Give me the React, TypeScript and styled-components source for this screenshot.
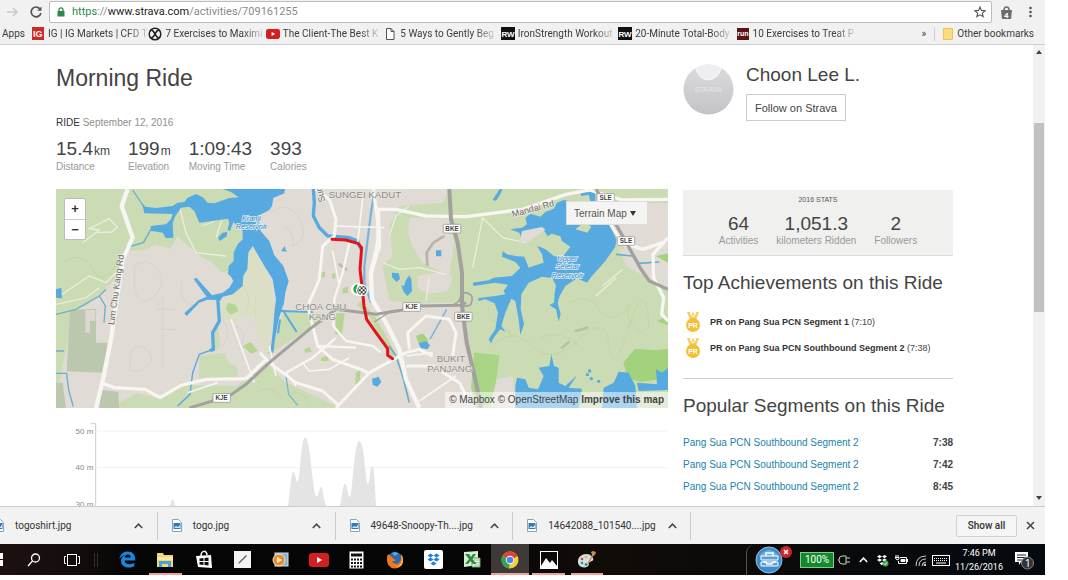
import React from "react";
import styled, { createGlobalStyle, css } from "styled-components";

const sans = `"Liberation Sans", Arial, sans-serif`;
const ui = `Roboto, "Noto Sans", sans-serif`;

const GlobalStyle = createGlobalStyle`
  *, *::before, *::after { box-sizing: border-box; }
  body { margin: 0; background: #fff; font-family: ${sans}; color: #444; }
  button, input, select { font: inherit; color: inherit; }
  svg { display: block; }
`;

const Desktop = styled.div`
  display: flex;
  flex-direction: column;
  height: 100vh;
  padding: 0 23px 5px 0;
  overflow: hidden;
`;

/* ---------- browser chrome ---------- */

const Toolbar = styled.header`
  flex: none;
  background: #f1f1f1;
  border-bottom: 1px solid #cfcfcf;
  font-family: ${ui};
  color: #3c3c3c;
`;

const AddressRow = styled.div`
  display: flex;
  align-items: center;
  height: 23px;
  padding: 1px 1px 0 4px;
`;

const IconButton = styled.button<{ $w?: number }>`
  display: flex;
  align-items: center;
  justify-content: center;
  flex: none;
  width: ${(p) => p.$w ?? 22}px;
  height: 22px;
  padding: 0;
  border: 0;
  background: none;
`;

const AddressBox = styled.div`
  flex: 1;
  display: flex;
  align-items: center;
  gap: 7px;
  height: 22px;
  margin-right: 3px;
  padding: 0 0 0 7px;
  border: 1px solid #bdbdbd;
  border-radius: 2px;
  background: #fff;
`;

const Url = styled.div`
  flex: 1;
  font-size: 11px;
  line-height: 16px;
  color: #8a8a8a;
  white-space: nowrap;
  b { font-weight: 400; color: #2b8a4b; }
  strong { font-weight: 400; color: #222; }
`;

const BookmarkRow = styled.nav`
  display: flex;
  align-items: center;
  height: 21px;
  padding: 0 11px 0 2px;
  font-size: 10px;
  line-height: 14px;
  white-space: nowrap;
  a { color: inherit; text-decoration: none; }
`;

const AppsLink = styled.a`
  flex: none;
  width: 29px;
`;

const BookmarkList = styled.div`
  flex: none;
  display: grid;
  grid-template-columns: repeat(7, minmax(0, 1fr));
  width: 822px;
`;

const Bookmark = styled.a`
  display: flex;
  align-items: center;
  gap: 3px;
  min-width: 0;
  padding-right: 4px;
  svg { flex: none; }
  span { mask-image: linear-gradient(to right, #000 80%, rgba(0, 0, 0, 0.2)); }
`;

const OtherBookmarks = styled.div`
  display: flex;
  align-items: center;
  gap: 8px;
  margin-left: auto;
  a { display: flex; align-items: center; gap: 4px; padding-left: 8px; border-left: 1px solid #d0d0d0; }
`;

/* ---------- page ---------- */

const Viewport = styled.div`
  flex: 1;
  min-height: 0;
  display: flex;
  background: #fff;
`;

const Content = styled.main`
  flex: 1;
  min-width: 0;
  display: grid;
  grid-template-columns: minmax(0, 1fr) 270px;
  align-items: start;
  gap: 15px;
  padding: 17px 80px 0 56px;
  overflow: hidden;
`;

const Title = styled.h1`
  margin: 0 0 22px;
  font-size: 23px;
  line-height: 32px;
  font-weight: 400;
`;

const RideLine = styled.p`
  margin: 0 0 7px;
  font-size: 10px;
  line-height: 14px;
  color: #8f8f8f;
  b { font-weight: 400; color: #333; }
`;

const Stats = styled.dl<{ $center?: boolean }>`
  display: flex;
  gap: 18px;
  margin: 0;
  div { display: flex; flex-direction: column-reverse; }
  dt { font-size: 10px; line-height: 12px; color: #999; }
  dd { margin: 0; font-size: 19px; line-height: 24px; }
  small { margin-left: 1px; font-size: 12px; line-height: 1; }
  ${(p) =>
    p.$center &&
    css`
      justify-content: center;
      text-align: center;
      dd { line-height: 22px; }
    `}
`;

const MapFrame = styled.section`
  position: relative;
  margin-top: 16px;
  > svg { width: 100%; height: auto; }
`;

const ZoomControl = styled.div`
  position: absolute;
  top: 9px;
  left: 8px;
  display: grid;
  width: 22px;
  border: 1px solid #bbb;
  border-radius: 2px;
  background: #fff;
  button {
    height: 20px;
    padding: 0;
    border: 0;
    background: none;
    font-size: 13px;
    line-height: 18px;
    font-weight: 700;
    color: #333;
  }
  button + button { border-top: 1px solid #ccc; }
`;

const MapStyle = styled.label`
  position: absolute;
  top: 12px;
  right: 20px;
  display: flex;
  align-items: center;
  background: #f4f4f2;
  border: 1px solid #dcdcda;
  color: #555;
  select {
    appearance: none;
    width: 80px;
    height: 22px;
    padding: 0 0 0 7px;
    border: 0;
    background: none;
    font-size: 10px;
  }
  svg { position: absolute; right: 11px; }
`;

const Attribution = styled.p`
  position: absolute;
  right: 0;
  bottom: 0;
  margin: 0;
  padding: 0 4px;
  font-size: 10px;
  line-height: 16px;
  color: #444;
  background: rgba(255, 255, 255, 0.5);
  a { color: inherit; text-decoration: none; }
`;

const Chart = styled.svg`
  width: 100%;
  height: auto;
`;

const Athlete = styled.section`
  display: flex;
  gap: 12px;
  height: 128px;
  padding-top: 2px;
  > svg { flex: none; }
  h2 { margin: 0 0 8px; font-size: 19px; line-height: 22px; font-weight: 400; }
`;

const FollowButton = styled.button`
  height: 27px;
  padding: 0 8px;
  border: 1px solid #ccc;
  background: #fff;
  font-size: 11px;
  color: #444;
`;

const YearStats = styled.section`
  padding: 5px 0 8px;
  background: #f0f0ef;
  border-bottom: 1px solid #dcdcdc;
  h3 {
    margin: 0 0 9px;
    font-size: 7px;
    line-height: 9px;
    font-weight: 400;
    text-align: center;
    color: #555;
  }
`;

const SideHeading = styled.h2`
  margin: 0;
  padding-top: 15px;
  font-size: 19px;
  line-height: 24px;
  font-weight: 400;
  white-space: nowrap;
`;

const Achievements = styled.ul`
  margin: 0;
  padding: 14px 0 17px;
  list-style: none;
  border-bottom: 1px solid #ccc;
  font-size: 9px;
  white-space: nowrap;
  li { display: flex; align-items: center; gap: 8px; height: 26px; padding-left: 1px; }
  svg { flex: none; }
  b { color: #333; }
`;

const Segments = styled.table`
  width: 100%;
  margin-top: 14px;
  border-collapse: collapse;
  font-size: 10px;
  line-height: 22px;
  td { padding: 0; }
  td:last-child { text-align: right; font-weight: 700; color: #444; }
  a { color: #1a83ab; text-decoration: none; }
`;

const Scrollbar = styled.div`
  flex: none;
  display: flex;
  flex-direction: column;
  width: 12px;
  background: #f1f1f1;
`;

const ScrollArrow = styled.button<{ $end?: boolean }>`
  display: flex;
  justify-content: center;
  height: 15px;
  padding: 5px 0 0;
  border: 0;
  background: none;
  margin-top: ${(p) => (p.$end ? "auto" : "0")};
`;

const ScrollThumb = styled.div`
  height: 41%;
  margin: 63px 1px 0;
  background: #c1c1c1;
`;

/* ---------- downloads ---------- */

const Downloads = styled.footer`
  flex: none;
  display: flex;
  align-items: center;
  height: 38px;
  padding-right: 2px;
  border-top: 1px solid #ccc;
  background: #f2f2f2;
  font-family: ${ui};
  font-size: 10px;
  color: #333;
  overflow: hidden;
`;

const DownloadList = styled.ul`
  display: grid;
  grid-template-columns: repeat(4, minmax(0, 1fr));
  flex: none;
  width: 711px;
  margin: 0 0 0 -20px;
  padding: 0;
  list-style: none;
  li {
    display: flex;
    align-items: center;
    height: 28px;
    padding: 0 7px 0 14px;
    border-right: 1px solid #ccc;
  }
  svg { flex: none; }
  span { flex: 1; margin-left: 11px; white-space: nowrap; }
`;

const ShowAll = styled.button`
  width: 61px;
  height: 22px;
  margin-left: auto;
  padding: 0;
  border: 1px solid #d2d2d2;
  border-radius: 2px;
  background: #f5f5f5;
  font-weight: 500;
`;

/* ---------- taskbar ---------- */

const Taskbar = styled.footer`
  flex: none;
  display: flex;
  align-items: stretch;
  height: 31px;
  background: linear-gradient(90deg, #1d1110, #120d0c 8%, #050505 12%, #060505 45%, #120c08 58%, #0c0a08 68%, #050a10);
  overflow: hidden;
  color: #fff;
  font-family: ${ui};
`;

const TaskButton = styled.button<{ $open?: boolean; $active?: boolean; $w?: number }>`
  display: flex;
  align-items: center;
  justify-content: center;
  ${(p) => p.$w && `width: ${p.$w}px;`}
  min-width: 0;
  padding: 0;
  border: 0;
  background: ${(p) => (p.$active ? "#3d3a38" : "none")};
  position: relative;
  &::after {
    content: "";
    position: absolute;
    left: ${(p) => (p.$active ? 0 : 3)}px;
    right: ${(p) => (p.$active ? 0 : 3)}px;
    bottom: 0;
    height: 2px;
    background: ${(p) => (p.$open ? "#f0a39b" : "transparent")};
  }
`;

const Pinned = styled.div`
  display: grid;
  grid-template-columns: repeat(13, 1fr);
  flex: none;
  width: 498px;
`;

const Divider = styled.i`
  width: 4px;
  height: 14px;
  margin: 9px 10px 0 4px;
  border: solid #3a2a24;
  border-width: 0 1px;
`;

const Tray = styled.div`
  display: flex;
  align-items: center;
  margin: 1px 0 0 auto;
  padding: 0 3px 0 8px;
  border-left: 1px solid #555;
  border-top-left-radius: 8px;
`;

const TrayCell = styled.span<{ $w: number }>`
  display: flex;
  justify-content: center;
  flex: none;
  width: ${(p) => p.$w}px;
`;

const Charge = styled.span`
  width: 34px;
  height: 16px;
  margin-left: 7px;
  border: 1px solid #7ccf86;
  background: #128a2c;
  font-size: 10px;
  line-height: 14px;
  text-align: center;
`;

const Clock = styled.time`
  width: 54px;
  font-size: 9px;
  line-height: 14px;
  text-align: center;
  white-space: nowrap;
`;

/* ---------- icons ---------- */

const Rw = () => (
  <svg width="14" height="13" viewBox="0 0 14 13">
    <rect width="14" height="13" fill="#111" />
    <text x="7" y="10" fontSize="8" fontWeight="700" textAnchor="middle" fontFamily="Liberation Sans" fill="#fff">RW</text>
  </svg>
);

const YouTube = ({ w, h }: { w: number; h: number }) => (
  <svg width={w} height={h} viewBox="0 0 20 14">
    <rect width="20" height="14" rx="3" fill="#d3201f" />
    <path d="M8 4v6l5-3z" fill="#fff" />
  </svg>
);

const bookmarks: { label: string; icon: React.ReactNode }[] = [
  {
    label: "IG | IG Markets | CFD T",
    icon: (
      <svg width="14" height="13" viewBox="0 0 14 13">
        <rect x="1" width="12" height="13" fill="#cf2a27" />
        <text x="2" y="10" fontSize="9" fontWeight="700" fontFamily="Liberation Sans" fill="#fff">IG</text>
      </svg>
    ),
  },
  {
    label: "7 Exercises to Maximi",
    icon: (
      <svg width="14" height="14" viewBox="0 0 14 14" fill="none" stroke="#222">
        <circle cx="7" cy="7" r="5.8" strokeWidth="1.5" />
        <path d="M3 3c2 0 3 2 4 4s2 4 4 4M11 3C9 3 8 5 7 7s-2 4-4 4" strokeWidth="1.6" />
      </svg>
    ),
  },
  { label: "The Client-The Best K", icon: <YouTube w={14} h={10} /> },
  {
    label: "5 Ways to Gently Beg",
    icon: (
      <svg width="14" height="12" viewBox="0 0 14 12" fill="#fff" stroke="#555">
        <path d="M3.500 .5h4.500l3 3v8H3.500zM8 .5v3h3" />
      </svg>
    ),
  },
  { label: "IronStrength Workout", icon: <Rw /> },
  { label: "20-Minute Total-Body", icon: <Rw /> },
  {
    label: "10 Exercises to Treat P",
    icon: (
      <svg width="14" height="12" viewBox="0 0 14 12">
        <rect x="1" width="12" height="12" fill="#5c1416" />
        <text x="7" y="8" fontSize="7" fontWeight="700" textAnchor="middle" fontFamily="Liberation Sans" fill="#fff">run</text>
      </svg>
    ),
  },
];

const Caret = ({ color = "#444" }: { color?: string }) => (
  <svg width="9" height="6" viewBox="0 0 9 6" fill="none" stroke={color} strokeWidth="1.500">
    <path d="M.8 5l3.700-3.800L8.200 5" />
  </svg>
);

const FileIcon = () => (
  <svg width="10" height="13" viewBox="0 0 10 13">
    <path d="M.5.500h6l3 3v9h-9z" fill="#fff" stroke="#8fa3b5" />
    <rect x="1.500" y="4" width="7" height="6" fill="#2b7cc0" />
    <path d="M2 9l2-2 2 1 2-2v3z" fill="#cfe6f7" />
  </svg>
);

const Medal = () => (
  <svg width="18" height="21" viewBox="0 0 18 21">
    <path d="M3 0h3l1 3 2-3 2 3 1-3h3l-3 8H6z" fill="#f3cf6a" />
    <path d="M6 1l3 4 3-4" fill="none" stroke="#fff" />
    <circle cx="9" cy="13" r="7" fill="#f5bf35" />
    <text x="9" y="16" fontSize="7" fontWeight="700" textAnchor="middle" fontFamily="Liberation Sans" fill="#fff">PR</text>
  </svg>
);

const Avatar = () => (
  <svg width="51" height="51" viewBox="0 0 51 51" role="img" aria-label="Choon Lee L.">
    <defs>
      <linearGradient id="jersey" x1="0" y1="0" x2="0" y2="1">
        <stop offset="0" stopColor="#dcdcdf" />
        <stop offset="1" stopColor="#c3c3c7" />
      </linearGradient>
      <clipPath id="round"><circle cx="25.500" cy="25.500" r="25" /></clipPath>
    </defs>
    <g clipPath="url(#round)">
      <rect width="51" height="51" fill="url(#jersey)" />
      <path d="M12 0q2 15 13 16Q37 15 39 0z" fill="#eeeef1" />
      <path d="M12 0q2 15 13 16Q37 15 39 0" fill="none" stroke="#fafafa" />
      <text x="25" y="28" fontSize="7" fontWeight="700" textAnchor="middle" fontFamily="Liberation Sans" fill="#e0e0e3">STRAVA</text>
    </g>
  </svg>
);

/* ---------- map ---------- */

const Shield = ({ x, y, label }: { x: number; y: number; label: string }) => (
  <g>
    <rect x={x - 26} y={y - 13} width="52" height="26" rx="3" fill="#fff" stroke="#8a8a8a" strokeWidth="2" />
    <text x={x} y={y + 7} fontSize="19" fontWeight="700" textAnchor="middle" fill="#444">{label}</text>
  </g>
);

const RideMap = () => (
  <svg viewBox="0 9 1836 657" role="img" aria-label="Ride map" fontFamily="Liberation Sans">
    <rect y="9" width="1836" height="657" fill="#e0dbd4" />

    <g fill="#cbdbb3">
      <path d="M0 9H560L570 170 532 225 520 262 495 258 470 230 440 215 385 170 365 150 345 188 300 176 262 192 218 195 204 212 190 268 150 305 95 358 0 384z" />
      <path d="M0 384L42 378 36 470 28 500 0 640z" />
      <path d="M575 200L592 184 622 240 645 300 655 350 645 470 630 510 610 460 590 400 560 385 540 420 500 400 492 345 530 325z" fill="#dbdfc6" />
      <path d="M190 650L240 622 310 636 360 600 400 598 540 600 600 560 640 540 690 590 800 640 850 666H190z" />
      <path d="M430 510L505 500 520 530 545 545 545 575 428 578z" />
      <path d="M470 440L485 410 492 480 470 500z" />
      <path d="M682 378L790 380 812 395 645 500 655 460z" />
      <path d="M1000 120L1030 60 1160 50 1180 9H1836V190L1780 200 1690 190 1710 240 1836 310V666H1260L1225 380 1210 350 1080 350 1000 345 980 240 1010 210z" />
    </g>
    <g fill="#e0dbd4">
      <path d="M1060 95L1180 98 1195 170 1180 270 1100 230 1068 180 1056 140z" />
      <path d="M1085 270l80-15 25 20-15 40-60 10-30-20z" />
      <path d="M1670 110L1700 55 1836 50V190L1770 205 1705 190z" />
      <path d="M1300 585l70-15 10 95h-75z" />
    </g>
    <g fill="#bcc8ad">
      <path d="M42 372L120 368V470H155L145 560 32 556z" />
      <path d="M135 612l52 5 3 49h-60z" />
      <path d="M0 590h20l10 76H0z" />
    </g>
    <path d="M88 372h30v32h-16v36H88z" fill="#dcd8cf" />
    <g fill="#a3d27d">
      <path d="M1255 500l75 8-10 80-15 60-40 18-20-60z" opacity=".85" />
      <path d="M1702 530l35-42 60 5 39-5v70l-20 20-60 10-40-10z" />
      <path d="M1800 210l36-8v28z M1802 405l34-14v26z" />
      <path d="M1080 450l20-8 15 18 3 20-30-8z" />
    </g>
    <g fill="#b7d592">
      <path d="M840 382h26l-8 62h-20z M795 260l12-4v18h-14z M828 265l10-4v16h-10z M860 308l16-8v20l-16 2z M515 350l24 6 8 20-24 10-14-16z" />
      <path d="M560 480l24-12 22 26-20 10z M795 515l22-6v16h-22z M745 490l16-6 6 14-20 2z M602 310l-6 50 8 60-8-50z M900 560l14-10-4 50-12-6z M635 500l10-6v14z" />
    </g>
    <path d="M908 350l40 40 50 90 15 30" fill="none" stroke="#c2d9a6" strokeWidth="16" />

    <g fill="none" stroke="#ccc9be" strokeWidth="2" opacity=".7">
      <path d="M235 240q40-30 70 10t-10 80-60-20zM320 330v210M300 370h60M310 430h50M230 490q30-20 50 10t-20 50-40-20zM380 280q-20 60 30 80" />
      <path d="M640 80q60-40 90 20t-20 80M680 120q40 20 30 60M500 400q30 40 0 80M540 420q40 20 10 70M560 300q30 30 10 80" />
    </g>
    <g fill="none" stroke="#b9cfa0" strokeWidth="2" opacity=".75">
      <path d="M1310 480q60-60 120 0t140-20 90 20 60-60 60 10M1540 350q60-30 90 20t90-10M1450 460q60-40 130 30M1300 400q50 10 70 60M1720 350q-20 60 40 90M600 620q50-30 80 20M700 620q40-10 60 30M20 230q60-40 90 20t80-30" />
    </g>
    <g fill="none" stroke="#e9efdb" strokeWidth="4">
      <path d="M80 170l50-38-30-4 60-30 24 26-18 14-50 2M10 330l90-60 50 20 30-30M0 355l90-20 40-30M370 60l20 80 30 60 90 10M440 120l60-25-20 60" />
      <path d="M1280 95l-30 150M1280 95l60 60 70 15M980 230l50 20 60-5 80 20M1110 345l10-70M1640 300l60-50M1620 330l60-55M1000 150l20-60 40-30" />
    </g>
    <g fill="none" stroke="#c9c1b6" strokeWidth="8" strokeLinecap="round" opacity=".9">
      <path d="M1114 236l-2-36 20-30 30-18" stroke="#b5aea6" />
      <path d="M1560 435l34-10M1518 485l20-16M850 235l20 15" stroke="#b3bf9e" />
    </g>

    <g fill="#57aae0">
      <path d="M258 50L268 62 300 66 350 60 365 50 385 48 395 35 420 24 440 34 455 50 475 52 520 36 548 34 525 18 500 9H687L685 22 652 36 648 60 640 72 606 90 614 135 640 165 655 208 682 240 698 285 688 320 684 350 668 400 657 460 652 500 643 500 650 440 656 370 660 340 650 280 625 240 602 200 590 180 577 200 574 250 562 270 560 300 530 325 500 332 492 345 480 342 455 341 430 350 392 390 385 382 428 342 452 332 413 280 421 275 468 328 500 320 520 305 532 285 524 270 516 265 518 240 533 225 533 200 545 175 560 160 560 135 532 108 522 135 515 132 520 108 515 98 470 105 430 110 415 75 400 62 375 65 358 90 350 110 352 155 330 157 320 140 282 134 285 120 330 115 345 100 350 84 265 82z" />
      <path d="M486 155l12-14 16-4-2 14-20 14z M0 310l16-5 2 32-18-2z M675 195l12-16 2 14 6 4z" />
      <path d="M1008 260l20 2 4 16-10 10-14-14z M1050 282l10-14 6 12 2 36-14 14-12-14-6-18 8 2z M1140 193h16v18h-16z" />
      <path d="M1088 472l22-6 12 12-8 12-20-4z M948 578l20-6 8 16-12 14-14-6z M1310 42l20-32h10l-10 20-10 14z" />
    </g>
    <g transform="translate(1218)" fill="#57aae0">
      <path d="M190 95L205 83 235 92 250 78 275 68 285 50 305 42 400 60 440 110 463 160 460 182 430 225 388 272 375 290 345 277 310 300 293 330 287 350 296 385 290 407 282 370 262 357 276 350 278 320 282 298 270 276 240 272 200 290 178 325 176 370 186 415 175 447 170 400 160 345 148 338 130 380 118 420 131 437 114 430 95 455 87 472 80 460 100 430 108 380 98 352 70 340 50 345 48 337 100 330 130 325 125 315 138 296 100 290 35 300 32 290 80 283 95 275 150 270 175 245 160 228 120 212 122 195 135 205 160 210 187 212 200 245 215 240 245 230 240 205 225 180 250 188 275 210 300 215 325 182 300 165 262 158 245 132 215 140 180 162 172 140 145 130 180 125 195 115z" />
      <path d="M355 22l20-8 25 6v30h-14l-6-24-22 4z" />
      <path d="M160 600L165 575 190 580 200 605 228 610 245 570 230 545 262 540 268 505 276 540 290 545 290 590 310 600 345 568 320 605 360 608 350 666H160zM425 605L455 590 470 557 500 560 520 600 525 666H420zM525 590L585 595 582 550 600 560 618 545V612L530 615z" />
      <circle cx="376" cy="566" r="5" /><circle cx="388" cy="578" r="5" /><circle cx="410" cy="586" r="5" /><circle cx="383" cy="555" r="5" />
    </g>
    <g transform="translate(1218)">
      <path d="M180 135l60-12 10 8-50 36-28 4z" fill="#e0dbd4" />
      <path d="M340 130l28-22 20 14-12 18-20-6z M235 165l34-22 26 8 8 26-34 22-28-14z" fill="#cbdbb3" />
    </g>
    <g fill="none" stroke="#57aae0">
      <path d="M485 335L490 405 470 440 472 490 462 494" strokeWidth="10" />
      <path d="M472 490L430 505 410 560 402 625 365 660" strokeWidth="4" />
      <path d="M230 12L262 60M285 130L262 170 210 185 202 205M0 385L60 370 130 330 150 310M130 330l18 30-4 50M0 495h24M0 562h32l6 50 14 50" stroke="#6aaed0" strokeWidth="4" />
      <path d="M675 375L770 378M680 372L722 438M672 400l-6 42" strokeWidth="6" />
      <path d="M772 9L775 50 772 90 790 125 815 150 880 155 905 165 915 190" strokeWidth="10" />
      <path d="M955 20L945 80 935 160 925 240 925 290 945 350" strokeWidth="7" stroke="#7bb4dc" />
      <path d="M690 570L698 625 725 658M1172 370l-50 90" strokeWidth="4" stroke="#78b1d6" />
      <path d="M1000 480l20 30 20 60 20 80M1680 205l50 5 20 22 60-4" strokeWidth="5" stroke="#6aaecb" />
    </g>

    <g fill="none" stroke="#f8f6f2" strokeLinejoin="round">
      <g strokeWidth="5">
        <path d="M830 195L850 300M720 600l-30-40M922 20L905 170M840 120L985 125M975 180l-30 60M740 530l20 25 60-5 60-35M770 515L840 455M1200 570l-110 75M1050 510l80-10M395 620l90-30M525 400l70 190M640 480l20 90" />
      </g>
      <path d="M780 9L820 40 840 100 835 150 800 180 790 280 755 360 770 420 785 480 830 520 920 552 935 560" strokeWidth="9" />
      <path d="M880 170L860 260 835 340 832 420 870 465 950 480 975 500M785 480L900 485M690 560L770 515 835 460" strokeWidth="7" />
      <path d="M952 9L970 140 950 245M950 245L970 180 966 70 1020 70 1110 90 1230 92 1400 70 1530 25 1600 12M1600 12L1700 42 1836 40" strokeWidth="10" />
      <path d="M966 70L968 170 945 260 948 340 990 410 1030 490 1050 580 1090 666" strokeWidth="13" />
      <path d="M1660 110l40 60 60 20 60-20M1836 155l-45 50 2 70 30 60-6 50 20 20" strokeWidth="10" />
      <path d="M612 500L640 530 720 590 800 615 845 655M840 666L940 560 1050 500 1090 490 1130 510M1060 490L1055 440 1110 390 1180 400 1200 440 1190 510M1050 540l80 0 80 50 20 40" strokeWidth="9" />
      <path d="M215 9L197 60 230 155 200 220 165 460 140 585 120 666" strokeWidth="13" />
      <path d="M140 592L175 605 268 610 312 635 375 598 450 580 570 578 630 520" strokeWidth="10" />
    </g>
    <g fill="none" stroke="#a3a19e">
      <path d="M400 666L520 630 570 595 640 530 760 430 840 370 960 385 1040 372 1080 360 1215 358 1230 350" strokeWidth="9" />
      <path d="M1180 9L1185 100 1205 170 1218 260 1218 360 1232 470 1260 590 1275 666" strokeWidth="12" />
      <path d="M1220 320q40 0 24 36-16 8-26 2M1180 358q30-2 34-26" strokeWidth="5" />
      <path d="M1620 9L1665 90 1700 150 1755 250 1780 285 1836 310" strokeWidth="10" />
      <path d="M955 408L1010 372" strokeWidth="4" />
    </g>

    <path d="M828 160L870 162 905 172 917 185 912 250 918 300 924 360 932 400 960 440 995 488 995 508 1010 518" fill="none" stroke="#e3131b" strokeWidth="9" strokeLinecap="round" strokeLinejoin="round" />
    <circle cx="904" cy="310" r="19" fill="#fff" />
    <path d="M905 294q-13 4-13 16t14 15q-6-15-1-31z" fill="#27a844" />
    <circle cx="918" cy="313" r="18" fill="#fff" />
    <circle cx="918" cy="313" r="14" fill="#333" />
    <g fill="#fff">
      <path d="M908 304h6v6h-6zM920 304h6v6h-6zM914 310h6v6h-6zM926 310h5v6h-5zM905 310h3v6h-3zM908 316h6v6h-6zM920 316h6v6h-6zM914 298h6v6h-6zM914 322h6v5h-6z" />
    </g>

    <g fill="#8b8a88" fontSize="29" stroke="#eae6e0" strokeWidth="4" paintOrder="stroke">
      <text x="818" y="36">SUNGEI KADUT</text>
      <text x="718" y="372">CHOA CHU</text>
      <text x="758" y="402">KANG</text>
      <text x="1142" y="529">BUKIT</text>
      <text x="1114" y="558">PANJANG</text>
    </g>
    <g fill="#6a6a6a" fontSize="27" stroke="#f2f0ea" strokeWidth="4" paintOrder="stroke">
      <text transform="translate(174 418) rotate(-82)">Lim Chu Kang Rd</text>
      <text transform="translate(1370 94) rotate(-15)">Mandai Rd</text>
      <text transform="translate(808 46) rotate(-105)">Sun</text>
    </g>
    <g fill="#3a88bd" fontSize="22" fontStyle="italic" textAnchor="middle" stroke="#d9ecf8" strokeWidth="5" paintOrder="stroke">
      <text x="586" y="105">Kranji</text>
      <text x="586" y="129">Reservoir</text>
      <text x="1534" y="224">Upper</text>
      <text x="1534" y="250">Seletar</text>
      <text x="1534" y="276">Reservoir</text>
    </g>
    <Shield x={497} y={636} label="KJE" />
    <Shield x={1067} y={363} label="KJE" />
    <Shield x={1188} y={128} label="BKE" />
    <Shield x={1222} y={392} label="BKE" />
    <Shield x={1649} y={36} label="SLE" />
    <Shield x={1710} y={165} label="SLE" />
  </svg>
);

const Elevation = () => (
  <Chart viewBox="168 -6 1836 294" role="img" aria-label="Elevation profile" fontFamily="Liberation Sans">
    <path d="M288 63H2004M288 173H2004" stroke="#f3f3f3" strokeWidth="3" />
    <path d="M510 288C516 262 520 262 526 288zM864 288C872 230 874 186 880 185 886 186 888 216 893 216 900 214 902 82 916 82 932 84 938 262 950 260 956 258 958 230 963 230 970 232 970 270 979 288zM1019 288C1026 270 1028 222 1035 221 1042 222 1044 262 1050 262 1058 250 1062 94 1078 93 1094 96 1096 220 1104 222 1110 220 1110 168 1117 168 1124 172 1124 240 1129 288z" fill="#e4e4e4" />
    <path d="M272 41H287V288" fill="none" stroke="#ccc" strokeWidth="3" />
    <g fontSize="24" fill="#888" textAnchor="end">
      <text x="280" y="71">50 m</text>
      <text x="280" y="181">40 m</text>
      <text x="280" y="290">30 m</text>
    </g>
  </Chart>
);

/* ---------- taskbar apps ---------- */

const apps: { name: string; open?: boolean; active?: boolean; icon: React.ReactNode }[] = [
  {
    name: "Edge",
    icon: (
      <svg width="17" height="17" viewBox="0 0 17 17">
        <path d="M.5 8C1 3 4.500.5 8.700.5c5 0 7.500 3.500 7.500 7.200v1.800H5.600c.2 2.600 2.400 3.700 4.800 3.700 1.900 0 3.400-.5 4.900-1.400v3.500c-1.600.9-3.500 1.300-5.500 1.300C5.400 16.600 2 14 2 10c0-2.600 1.500-4.700 3.900-5.800C3.800 4.400 1.700 5.800.5 8zm5.200-1.400h5.900c0-1.900-1-3-2.800-3-1.700 0-2.800 1.200-3.100 3z" fill="#1a86dc" />
      </svg>
    ),
  },
  {
    name: "File Explorer",
    open: true,
    icon: (
      <svg width="18" height="16" viewBox="0 0 18 16">
        <path d="M1 1h6l1 2h9v12H1z" fill="#f3d673" />
        <path d="M1 5h16v3H1z" fill="#fbe9a3" />
        <path d="M3 15V9h12v6h-3v-3H6v3z" fill="#3fa6da" />
      </svg>
    ),
  },
  {
    name: "Store",
    icon: (
      <svg width="18" height="19" viewBox="0 0 18 19">
        <path d="M6 6C6 0 12 0 12 5" fill="none" stroke="#fff" strokeWidth="1.500" />
        <path d="M1 6l15-1 1 13-14-1z" fill="#fff" />
        <path d="M4.500 8.500l4-.5v3h-4zM9.500 8l4-.5V11h-4zM4.500 12h4v3l-4-.5zM9.500 12h4v3.500l-4-.5z" fill="#111" />
      </svg>
    ),
  },
  {
    name: "Journal",
    icon: (
      <svg width="17" height="17" viewBox="0 0 17 17">
        <rect width="17" height="17" fill="#f3f3f3" />
        <path d="M4 13l1-2 7-7 1 1-7 7z" fill="#5f6a5c" />
      </svg>
    ),
  },
  {
    name: "Media Player",
    icon: (
      <svg width="17" height="16" viewBox="0 0 17 16">
        <rect x="3" y="1" width="13" height="13" fill="#7fb4d8" stroke="#cde" />
        <circle cx="7" cy="8" r="6" fill="#f08a24" stroke="#fbe0c0" />
        <path d="M5 5v6l5-3z" fill="#fff" />
      </svg>
    ),
  },
  { name: "YouTube", icon: <YouTube w={20} h={14} /> },
  {
    name: "Calculator",
    icon: (
      <svg width="15" height="18" viewBox="0 0 15 18">
        <rect x=".5" y=".5" width="14" height="17" fill="#fff" />
        <path d="M2 2.500h11v3H2zM2 7.500h2v2H2zM5 7.500h2v2H5zM8 7.500h2v2H8zM11 7.500h2v2h-2zM2 11h2v2H2zM5 11h2v2H5zM8 11h2v2H8zM11 11h2v2h-2zM2 14.500h2v2H2zM5 14.500h2v2H5zM8 14.500h2v2H8zM11 14.500h2v2h-2z" fill="#111" />
      </svg>
    ),
  },
  {
    name: "Firefox",
    icon: (
      <svg width="18" height="18" viewBox="0 0 18 18">
        <circle cx="9" cy="8.500" r="7.500" fill="#2f66b5" />
        <path d="M6 2q4-2 7 1-3 0-4 2z" fill="#58b4e4" />
        <path d="M1 6Q0 17 9 17.500 17 17 17 9q0-4-2-6 1 8-4 10-4 0-5-3 2 1 4-1-3-1-4-3Q3 5 3 3 1 4 1 6z" fill="#ee7a1c" />
        <path d="M15 4q3 8-4 12 6 0 6-7 0-3-2-5z" fill="#f8c43a" />
      </svg>
    ),
  },
  {
    name: "Dropbox",
    icon: (
      <svg width="19" height="19" viewBox="0 0 19 19">
        <rect width="19" height="19" rx="2" fill="#fff" />
        <path d="M6.500 3.500l3 2-3 2-3-2zM12.500 3.500l3 2-3 2-3-2zM6.500 7.500l3 2-3 2-3-2zM12.500 7.500l3 2-3 2-3-2zM9.500 11.500l3 2-3 2-3-2z" fill="#1a7fe0" />
      </svg>
    ),
  },
  {
    name: "Excel",
    icon: (
      <svg width="18" height="17" viewBox="0 0 18 17">
        <path d="M1 1l14-1v14L1 16z" fill="#d9edd6" />
        <path d="M9 7h8v9H9z" fill="#eef6ee" stroke="#5aa55d" />
        <path d="M11 9h5M11 11.500h5M11 14h5" stroke="#8cc48d" />
        <path d="M2 3h4l2 3 2-3h3L9.500 8l4 5H10L7.500 10 5 13H2l4-5z" fill="#2d8a3a" />
      </svg>
    ),
  },
  {
    name: "Chrome",
    open: true,
    active: true,
    icon: (
      <svg width="18" height="18" viewBox="0 0 18 18">
        <circle cx="9" cy="9" r="8.500" fill="#f6cf3a" />
        <path d="M9 9L1.600 4.800A8.500 8.500 0 0 1 16.500 5z" fill="#dc4437" />
        <path d="M9 9l-1 8.500A8.500 8.500 0 0 1 1.600 4.800z" fill="#37a155" />
        <path d="M9 5h7.500L9 9z" fill="#dc4437" />
        <circle cx="9" cy="9" r="4.200" fill="#fff" />
        <circle cx="9" cy="9" r="3.300" fill="#4587f0" />
      </svg>
    ),
  },
  {
    name: "Photos",
    open: true,
    icon: (
      <svg width="18" height="18" viewBox="0 0 18 18">
        <rect x=".5" y=".5" width="17" height="17" fill="none" stroke="#fff" />
        <path d="M1 15l5-8 4 5 2-3 5 6v2H1z" fill="#fff" />
      </svg>
    ),
  },
  {
    name: "Paint",
    open: true,
    icon: (
      <svg width="19" height="18" viewBox="0 0 19 18">
        <path d="M1 12Q0 6 6 3.500q6-1.500 9 2 3 4-1 5-3 1-2 3-1 3-5 3-5-.5-6-4.500z" fill="#cfe0ea" />
        <circle cx="5" cy="8" r="1.300" fill="#d8433a" /><circle cx="9" cy="6" r="1.300" fill="#e6b72c" /><circle cx="5" cy="12" r="1.300" fill="#3a9a4c" /><circle cx="9" cy="13.500" r="1.300" fill="#3467b5" />
        <path d="M10 13l5-9-1-3 2-1 3 1-1 3-2 1-5 9z" fill="#c98d4e" />
      </svg>
    ),
  },
];

const DropboxTray = () => (
  <svg width="13" height="13" viewBox="0 0 13 13">
    <path d="M3.500 1l2.500 1.600-2.500 1.600L1 2.600zM8.500 1L11 2.600 8.500 4.200 6 2.600zM3.500 4.500L6 6.100 3.500 7.700 1 6.100zM8.500 4.500L11 6.100 8.500 7.700 6 6.100zM6 8l2.500 1.600L6 11.200 3.500 9.600z" fill="#fff" />
    <circle cx="9.500" cy="9.500" r="3" fill="#3aa34a" />
    <path d="M8 9.500l1.200 1.200 1.800-2.200" fill="none" stroke="#fff" />
  </svg>
);

const downloads = ["togoshirt.jpg", "togo.jpg", "49648-Snoopy-Th....jpg", "14642088_101540....jpg"];
const segments = ["7:38", "7:42", "8:45"];

export default function App() {
  return (
    <Desktop>
      <GlobalStyle />
      <Toolbar>
        <AddressRow>
          <IconButton aria-label="Forward" $w={18}>
            <svg width="12" height="10" viewBox="0 0 12 10" fill="none" stroke="#c9c9c9" strokeWidth="1.500"><path d="M0 5h10M6 1l4 4-4 4" /></svg>
          </IconButton>
          <IconButton aria-label="Reload" $w={27}>
            <svg width="12" height="12" viewBox="0 0 12 12" fill="none" stroke="#555" strokeWidth="1.700"><path d="M10.200 3.200A4.900 4.900 0 1 0 10.900 7" /><path d="M11.500.5v4.300H7.200z" fill="#555" stroke="none" /></svg>
          </IconButton>
          <AddressBox>
            <svg width="8" height="10" viewBox="0 0 8 10"><rect x=".5" y="4" width="7" height="5.500" fill="#2b8a4b" /><path d="M2 4.500V2.800a2 2 0 0 1 4 0v1.700" fill="none" stroke="#2b8a4b" strokeWidth="1.300" /></svg>
            <Url><b>https</b>://<strong>www.strava.com</strong>/activities/709161255</Url>
            <IconButton aria-label="Bookmark this page">
              <svg width="12" height="12" viewBox="0 0 12 12" fill="none" stroke="#555" strokeWidth="1.100"><path d="M6 1l1.400 3.400 3.700.3-2.800 2.400.9 3.600L6 8.800l-3.200 1.900.9-3.600L.9 4.700l3.700-.3z" /></svg>
            </IconButton>
          </AddressBox>
          <IconButton aria-label="Extension">
            <svg width="13" height="13" viewBox="0 0 13 13"><path d="M1 4h11l-1 9H2z" fill="#6b6b72" /><path d="M4 4q0-3 2.500-3T9 4" fill="none" stroke="#6b6b72" strokeWidth="1.500" /><text x="4" y="12" fontSize="8" fontWeight="700" fill="#fff">4</text></svg>
          </IconButton>
          <IconButton aria-label="Menu" $w={27}>
            <svg width="3" height="12" viewBox="0 0 3 12" fill="#555"><circle cx="1.500" cy="2" r="1.300" /><circle cx="1.500" cy="6" r="1.300" /><circle cx="1.500" cy="10" r="1.300" /></svg>
          </IconButton>
        </AddressRow>
        <BookmarkRow>
          <AppsLink href="#apps">Apps</AppsLink>
          <BookmarkList>
            {bookmarks.map((b) => (
              <Bookmark href="#bookmark" key={b.label}>{b.icon}<span>{b.label}</span></Bookmark>
            ))}
          </BookmarkList>
          <OtherBookmarks>
            <span>»</span>
            <a href="#other">
              <svg width="10" height="12" viewBox="0 0 10 12"><path d="M.5.500h9v11h-9z" fill="#fbdc7f" stroke="#e8c25c" /></svg>
              Other bookmarks
            </a>
          </OtherBookmarks>
        </BookmarkRow>
      </Toolbar>

      <Viewport>
        <Content>
          <div>
            <Title>Morning Ride</Title>
            <RideLine><b>RIDE</b> September 12, 2016</RideLine>
            <Stats>
              <div><dt>Distance</dt><dd>15.4<small>km</small></dd></div>
              <div><dt>Elevation</dt><dd>199<small>m</small></dd></div>
              <div><dt>Moving Time</dt><dd>1:09:43</dd></div>
              <div><dt>Calories</dt><dd>393</dd></div>
            </Stats>
            <MapFrame>
              <RideMap />
              <ZoomControl>
                <button aria-label="Zoom in">+</button>
                <button aria-label="Zoom out">−</button>
              </ZoomControl>
              <MapStyle>
                <select aria-label="Map style" defaultValue="terrain">
                  <option value="terrain">Terrain Map</option>
                </select>
                <svg width="6" height="5" viewBox="0 0 6 5"><path d="M0 0h6L3 5z" fill="#333" /></svg>
              </MapStyle>
              <Attribution>
                <a href="#mapbox">© Mapbox</a> <a href="#osm">© OpenStreetMap</a> <a href="#improve"><b>Improve this map</b></a>
              </Attribution>
            </MapFrame>
            <Elevation />
          </div>

          <aside>
            <Athlete>
              <Avatar />
              <div>
                <h2>Choon Lee L.</h2>
                <FollowButton>Follow on Strava</FollowButton>
              </div>
            </Athlete>
            <YearStats>
              <h3>2016 STATS</h3>
              <Stats $center>
                <div><dt>Activities</dt><dd>64</dd></div>
                <div><dt>kilometers Ridden</dt><dd>1,051.3</dd></div>
                <div><dt>Followers</dt><dd>2</dd></div>
              </Stats>
            </YearStats>
            <SideHeading>Top Achievements on this Ride</SideHeading>
            <Achievements>
              <li><Medal /><span><b>PR on Pang Sua PCN Segment 1</b> (7:10)</span></li>
              <li><Medal /><span><b>PR on Pang Sua PCN Southbound Segment 2</b> (7:38)</span></li>
            </Achievements>
            <SideHeading>Popular Segments on this Ride</SideHeading>
            <Segments>
              <tbody>
                {segments.map((t) => (
                  <tr key={t}><td><a href="#segment">Pang Sua PCN Southbound Segment 2</a></td><td>{t}</td></tr>
                ))}
              </tbody>
            </Segments>
          </aside>
        </Content>
        <Scrollbar>
          <ScrollArrow aria-label="Scroll up"><svg width="6" height="4" viewBox="0 0 6 4"><path d="M0 4h6L3 0z" fill="#444" /></svg></ScrollArrow>
          <ScrollThumb />
          <ScrollArrow aria-label="Scroll down" $end><svg width="6" height="4" viewBox="0 0 6 4"><path d="M0 0h6L3 4z" fill="#444" /></svg></ScrollArrow>
        </Scrollbar>
      </Viewport>

      <Downloads>
        <DownloadList>
          {downloads.map((d) => (
            <li key={d}>
              <FileIcon /><span>{d}</span>
              <IconButton aria-label={`Options for ${d}`}><Caret /></IconButton>
            </li>
          ))}
        </DownloadList>
        <ShowAll>Show all</ShowAll>
        <IconButton aria-label="Close downloads" $w={26}>
          <svg width="9" height="9" viewBox="0 0 9 9" stroke="#444" strokeWidth="1.500"><path d="M1 1l7 7M8 1L1 8" /></svg>
        </IconButton>
      </Downloads>

      <Taskbar>
        <TaskButton aria-label="Start" $w={15}>
          <svg width="15" height="13" viewBox="0 0 15 13" fill="#fff"><path d="M-1 0h4v6h-4zM-1 7h4v6h-4z" /></svg>
        </TaskButton>
        <TaskButton aria-label="Search" $w={38}>
          <svg width="14" height="14" viewBox="0 0 14 14" fill="none" stroke="#fff" strokeWidth="1.300"><circle cx="8.500" cy="5" r="4" /><path d="M5.500 8L1 13" /></svg>
        </TaskButton>
        <TaskButton aria-label="Task view" $w={37}>
          <svg width="16" height="12" viewBox="0 0 16 12" fill="none" stroke="#fff"><rect x="3.500" y=".5" width="9" height="11" /><path d="M2 2.500H.5v7H2M14 2.500h1.500v7H14" /></svg>
        </TaskButton>
        <Divider />
        <Pinned>
          {apps.map((a) => (
            <TaskButton key={a.name} aria-label={a.name} $open={a.open} $active={a.active}>{a.icon}</TaskButton>
          ))}
        </Pinned>
        <Tray>
          <svg width="38" height="30" viewBox="0 0 38 30">
            <circle cx="14" cy="15" r="13" fill="#3f8ccc" stroke="#8cc3ea" />
            <path d="M4 11q10-12 20 0z" fill="#8cc3ea" opacity=".6" />
            <path d="M6 11h17v4H6zM6 17h17v4H6z" fill="#5b9fd6" stroke="#fff" />
            <path d="M11 11V8h7v3M8 17h3l1 2h5l1-2h3" fill="none" stroke="#fff" strokeWidth="1.500" />
            <circle cx="31" cy="7" r="6" fill="#c9252b" />
            <path d="M29 5l4 4M33 5l-4 4" stroke="#fff" strokeWidth="1.500" />
          </svg>
          <Charge>100%</Charge>
          <TrayCell $w={21}>
            <svg width="13" height="10" viewBox="0 0 13 10" fill="none" stroke="#ccc"><path d="M8 1H4Q1 1 1 5t3 4h4zM8 3h4M8 7h4M1 5H0" /></svg>
          </TrayCell>
          <TrayCell $w={17}><Caret color="#fff" /></TrayCell>
          <TrayCell $w={20}><DropboxTray /></TrayCell>
          <TrayCell $w={19}>
            <svg width="13" height="10" viewBox="0 0 13 10" fill="none" stroke="#fff"><path d="M5 2.500h6.500v6H3.500V6M12.500 4v3M1 0v2M3 0v2M0 2.500h4v1.500l-2 1z" /><path d="M6 4.500h4v2H6z" fill="#fff" /></svg>
          </TrayCell>
          <TrayCell $w={19}>
            <svg width="11" height="11" viewBox="0 0 11 11" fill="none" stroke="#ccc"><path d="M1 11Q1 1 11 1M4 11Q4 4 11 4M7 11Q7 7 11 7" /><circle cx="10" cy="10" r="1" fill="#fff" /></svg>
          </TrayCell>
          <TrayCell $w={22}>
            <svg width="18" height="11" viewBox="0 0 18 11" fill="none" stroke="#fff"><rect x=".5" y=".5" width="17" height="10" /><path d="M2 3.500h14M2 5.500h14" strokeDasharray="1 1" /><path d="M4 8h10" /></svg>
          </TrayCell>
          <Clock>7:46 PM<br />11/26/2016</Clock>
          <TrayCell $w={36}>
            <svg width="20" height="20" viewBox="0 0 20 20">
              <path d="M1 2h13v10H7l-2 3v-3H1z" fill="#fff" />
              <path d="M3 5h9M3 7.500h9M3 10h5" stroke="#222" />
              <circle cx="13.500" cy="13" r="6" fill="#333" stroke="#888" />
              <text x="11" y="17" fontSize="10" fill="#fff">1</text>
            </svg>
          </TrayCell>
        </Tray>
      </Taskbar>
    </Desktop>
  );
}
